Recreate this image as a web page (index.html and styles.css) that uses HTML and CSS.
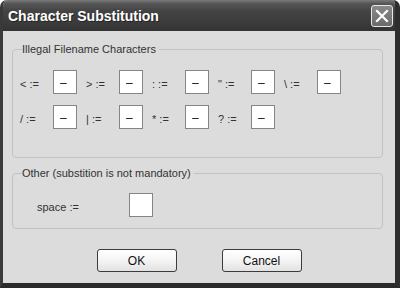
FILE: index.html
```html
<!DOCTYPE html>
<html>

<head>
    <title>Character Substitution</title>

    <link rel="stylesheet" href="styles.css">
</head>

<body>

    <div class="window">

        <div class="titlebar">
            <span class="title">Character Substitution</span>
            <button class="close-btn" type="button">
                <svg width="14" height="14" viewBox="0 0 14 14">
                    <path d="M2 2 L12 12 M12 2 L2 12" stroke="#fff" stroke-width="2.2" stroke-linecap="square" />
                </svg>
            </button>
        </div>

        <div class="content">

            <fieldset class="group">
                <legend>Illegal Filename Characters</legend>

                <div class="char-grid">
                    <label for="c-lt">&lt; :=</label>
                    <input type="text" id="c-lt" class="char-input" value="–">
                    <label for="c-gt">&gt; :=</label>
                    <input type="text" id="c-gt" class="char-input" value="–">
                    <label for="c-colon">: :=</label>
                    <input type="text" id="c-colon" class="char-input" value="–">
                    <label for="c-quote">" :=</label>
                    <input type="text" id="c-quote" class="char-input" value="–">
                    <label for="c-bslash">\ :=</label>
                    <input type="text" id="c-bslash" class="char-input" value="–">

                    <label for="c-slash">/ :=</label>
                    <input type="text" id="c-slash" class="char-input" value="–">
                    <label for="c-pipe">| :=</label>
                    <input type="text" id="c-pipe" class="char-input" value="–">
                    <label for="c-star">* :=</label>
                    <input type="text" id="c-star" class="char-input" value="–">
                    <label for="c-quest">? :=</label>
                    <input type="text" id="c-quest" class="char-input" value="–">
                </div>
            </fieldset>

            <fieldset class="group group-other">
                <legend>Other (substition is not mandatory)</legend>

                <div class="space-row">
                    <label for="c-space">space :=</label>
                    <input type="text" id="c-space" class="char-input" value="">
                </div>
            </fieldset>

            <div class="buttons">
                <button class="btn" type="button">OK</button>
                <button class="btn" type="button">Cancel</button>
            </div>

        </div>

    </div>

</body>

</html>
```

FILE: styles.css
```css
* {
    margin: 0;
    padding: 0;
    box-sizing: border-box;
}

html,
body {
    width: 100%;
    height: 100%;
}

body {
    background-color: #fff;
    font-family: "Liberation Sans", Arial, sans-serif;
    font-size: 11px;
    color: #333;
}

.window {
    width: 400px;
    height: 288px;
    display: flex;
    flex-direction: column;
    background-color: #dcdcdc;
    border-left: 3px solid #3a3a3a;
    border-right: 5px solid #2e2e2e;
    border-bottom: 5px solid #2a2a2a;
    border-radius: 7px 7px 0 0;
    overflow: hidden;
}

.titlebar {
    height: 31px;
    margin: 0 -5px 0 -3px;
    padding: 0 7px 0 8px;
    display: flex;
    align-items: center;
    justify-content: space-between;
    background: linear-gradient(to bottom, #7a7a7a 0%, #555 12%, #444 35%, #3c3c3c 70%, #333 100%);
    border-radius: 7px 7px 0 0;
}

.title {
    color: #fff;
    font-weight: bold;
    font-size: 14px;
    text-shadow: 1px 1px 0 #222;
    padding-top: 1px;
}

.close-btn {
    width: 22px;
    height: 22px;
    display: flex;
    align-items: center;
    justify-content: center;
    background: linear-gradient(to bottom, #8a8a8a, #6a6a6a);
    border: 1px solid #e8e8e8;
    border-radius: 3px;
}

.content {
    flex: 1;
    padding: 11px 12px 0 9px;
    display: flex;
    flex-direction: column;
}

.group {
    border: 1px solid #c2c2c2;
    border-radius: 4px;
    padding: 14px 6px 28px 7px;
}

.group legend {
    margin-left: 2px;
    padding: 0 3px 0 0;
    line-height: 14px;
}

.group-other {
    margin-top: 8px;
    padding: 13px 6px 11px 7px;
}

.char-grid {
    display: grid;
    grid-template-columns: repeat(5, 24px 24px);
    column-gap: 9px;
    row-gap: 11px;
    align-items: center;
}

.char-grid label,
.space-row label {
    padding-top: 3px;
    white-space: nowrap;
}

.char-input {
    width: 24px;
    height: 24px;
    border: 1px solid #858585;
    background-color: #fff;
    font-family: "Liberation Sans", Arial, sans-serif;
    font-size: 12px;
    color: #111;
    padding: 2px 0 0 6px;
    outline: 0;
}

.space-row {
    margin-left: 17px;
    display: flex;
    align-items: center;
}

.space-row label {
    width: 92px;
}

.buttons {
    margin-top: 20px;
    display: flex;
    justify-content: center;
    gap: 45px;
    padding-left: 3px;
}

.btn {
    width: 80px;
    height: 23px;
    font-family: "Liberation Sans", Arial, sans-serif;
    font-size: 12px;
    color: #111;
    background: linear-gradient(to bottom, #fff 0%, #f4f4f4 50%, #e2e2e2 100%);
    border: 1px solid #3c3c3c;
    border-radius: 3px;
}
```
